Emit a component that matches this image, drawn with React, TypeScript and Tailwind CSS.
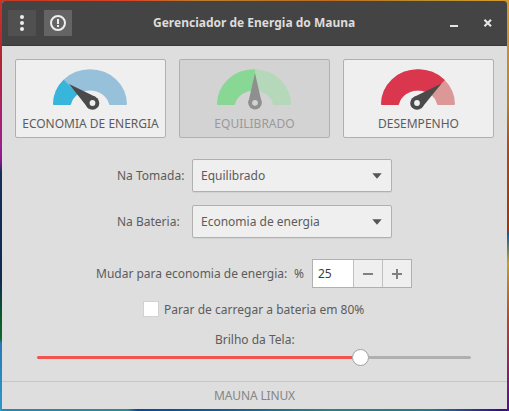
import type { ReactNode } from "react";

const ARC = "M3 38.2 A37 35 0 0 1 77 38.2 Q77 39 75.5 39 L60 39 Q59.2 39 59 38 A19.5 17.5 0 0 0 21 38 Q20.8 39 20 39 L4.5 39 Q3 39 3 38.2 Z";

type GaugeProps = { id: string; base: string; fill: string; clip: string; needle: string; hub: [number, number]; ink: string; hole: string };

function Gauge({ id, base, fill, clip, needle, hub, ink, hole }: GaugeProps) {
  return (
    <svg width="81" height="47" viewBox="0 0 81 47" className="block shrink-0">
      <clipPath id={id}>
        <path d={clip} />
      </clipPath>
      <path d={ARC} fill={base} />
      <path d={ARC} fill={fill} clipPath={`url(#${id})`} />
      <path d={needle} fill={ink} />
      <circle cx={hub[0]} cy={hub[1]} r="6.8" fill={ink} />
      <circle cx={hub[0]} cy={hub[1]} r="2.9" fill={hole} />
    </svg>
  );
}

function ProfileCard({ label, off, children }: { label: string; off?: boolean; children: ReactNode }) {
  return (
    <button
      disabled={off}
      className={`flex h-[79px] w-[151px] flex-col items-center rounded-[2px] border border-[#b0b0b0] pt-[6px] ${off ? "bg-[#d3d3d3] text-[#9a9a9a]" : "bg-[#efefef] text-[#5c5c5c]"}`}
    >
      {children}
      <span className="mt-[3px] leading-4 whitespace-nowrap">{label}</span>
    </button>
  );
}

function SelectRow({ label, value }: { label: string; value: string }) {
  return (
    <div className="flex items-center">
      <span className="w-[75px] whitespace-nowrap">{label}</span>
      <button className="flex h-[33px] w-[200px] items-center justify-between rounded-[2px] border border-[#b0b0b0] bg-[#efefef] pr-[9px] pl-2 shadow-[0_1px_1px_rgba(0,0,0,0.06)]">
        <span>{value}</span>
        <svg width="10" height="6" viewBox="0 0 10 6">
          <path d="M0.3 0.3h9.4L5 5.7z" fill="#555" />
        </svg>
      </button>
    </div>
  );
}

export default function App() {
  return (
    <div className="h-[411px] w-[509px] bg-[linear-gradient(90deg,#c43a22_0%,#d94324_25%,#bb7f2e_40%,#bd6c22_65%,#b9932e_85%,#d79a2a_100%)] font-['Noto_Sans',sans-serif] text-[12px] text-[#5c5c5c]">
      <div className="flex h-[411px] flex-col bg-[linear-gradient(180deg,#c9332b_0%,#b02434_15%,#a0208a_35%,#8a1a8c_39%,#143058_42%,#102a50_68%,#0c5a2b_77%,#0c6a30_82.5%,#2878b8_83.5%,#2a9ac8_100%),linear-gradient(180deg,#d79a2a_0%,#b9832a_25%,#b04a18_36%,#a8300f_56%,#0b5fa0_57%,#c8a020_64%,#b8452e_78%,#8c1878_92%,#50108c_100%),linear-gradient(90deg,#2289b2_0%,#2c8995_25%,#0a4996_27%,#165d91_45%,#2c8187_65%,#24778c_85%,#351182_98%)] bg-[size:2px_411px,2px_411px,509px_2px] bg-[position:left_top,right_top,left_bottom] bg-no-repeat px-[2px] pt-px pb-[2px]">
        <div className="flex h-[408px] flex-col overflow-hidden rounded-t-[3px] bg-[#dedede]">
          <header className="flex h-[45px] shrink-0 items-center border-b border-[#383838] bg-[#444]">
            <button className="ml-[6px] flex h-[26px] w-7 items-center justify-center rounded-[1px] bg-[#505050]">
              <svg width="6" height="18" viewBox="0 0 6 18" fill="#eee">
                <circle cx="3" cy="3" r="2" />
                <circle cx="3" cy="9" r="2" />
                <circle cx="3" cy="15" r="2" />
              </svg>
            </button>
            <button className="ml-2 flex h-[26px] w-7 items-center justify-center rounded-[1px] bg-[#646464]">
              <svg width="18" height="18" viewBox="0 0 18 18">
                <circle cx="9" cy="9" r="7" fill="none" stroke="#eee" strokeWidth="2" />
                <path d="M8 5h2v5H8zM8 11h2v2H8z" fill="#eee" />
              </svg>
            </button>
            <h1 className="ml-[81px] w-[203px] text-[12px] font-bold whitespace-nowrap text-[#dcdcdc]">Gerenciador de Energia do Mauna</h1>
            <svg className="ml-[93px]" width="50" height="18" viewBox="0 0 50 18">
              <path d="M1 11h8v2H1z" fill="#e4e4e4" />
              <path d="M35.5 5.7l6.5 6.5M42 5.7l-6.5 6.5" stroke="#e4e4e4" strokeWidth="2.2" />
            </svg>
          </header>

          <main className="flex grow flex-col">
            <div className="mt-[13px] flex gap-[13px] px-[13px]">
              <ProfileCard label="ECONOMIA DE ENERGIA">
                <Gauge id="eco" base="#97c0da" fill="#38b5da" clip="M0 0L40 40L0 47z" needle="M19 18L45.8 31L38.6 42.8z" hub={[42.5, 37]} ink="#4a4a4a" hole="#efefef" />
              </ProfileCard>
              <ProfileCard label="EQUILIBRADO" off>
                <Gauge id="bal" base="#b4d8b9" fill="#89d795" clip="M0 0H41V47H0z" needle="M41 7L47.8 37H34.2z" hub={[41, 36.8]} ink="#8f8f8f" hole="#d3d3d3" />
              </ProfileCard>
              <ProfileCard label="DESEMPENHO">
                <Gauge id="perf" base="#dc9896" fill="#da364d" clip="M0 0H81L39 42V47H0z" needle="M63.5 17.5L43.2 42.6L35.4 31.2z" hub={[39, 37]} ink="#4a4a4a" hole="#efefef" />
              </ProfileCard>
            </div>

            <div className="mt-[21px] ml-[115px] flex flex-col gap-[13px]">
              <SelectRow label="Na Tomada:" value="Equilibrado" />
              <SelectRow label="Na Bateria:" value="Economia de energia" />
            </div>

            <div className="mt-[21px] ml-[94px] flex items-center whitespace-nowrap">
              <span className="w-[198px]">Mudar para economia de energia:</span>
              <span className="w-[18px]">%</span>
              <div className="flex h-[29px] w-[100px] border border-[#b0b0b0] bg-[#efefef]">
                <span className="flex w-10 items-center bg-white pl-[5px] text-[#3c3c3c]">25</span>
                <button className="flex w-[29px] items-center justify-center border-l border-[#c0c0c0]">
                  <svg width="10" height="10" viewBox="0 0 10 10"><path d="M0 4h10v2H0z" fill="#808080" /></svg>
                </button>
                <button className="flex w-[29px] items-center justify-center border-l border-[#c0c0c0]">
                  <svg width="10" height="10" viewBox="0 0 10 10"><path d="M0 4h4V0h2v4h4v2H6v4H4V6H0z" fill="#808080" /></svg>
                </button>
              </div>
            </div>

            <label className="mt-[13px] ml-[141px] flex h-4 items-center gap-[5px] whitespace-nowrap">
              <span className="size-4 border border-[#d2d2d2] bg-white" />
              <span className="pt-[2px] tracking-[0.02px]">Parar de carregar a bateria em 80%</span>
            </label>

            <div className="mt-[15px] ml-[213px] leading-4 whitespace-nowrap">Brilho da Tela:</div>
            <div className="mt-px ml-[35px] flex h-[17px] w-[434px] items-center">
              <div className="h-[3px] w-[315px] rounded-l-full bg-[#f0544c]" />
              <div className="size-[17px] shrink-0 rounded-full border border-[#a0a0a0] bg-white" />
              <div className="h-[3px] grow rounded-r-full bg-[#b0b0b0]" />
            </div>
          </main>

          <footer className="flex h-7 shrink-0 items-center justify-center border-t border-[#c6c6c6] tracking-[-0.15px] text-[#858585]">MAUNA LINUX</footer>
        </div>
      </div>
    </div>
  );
}
